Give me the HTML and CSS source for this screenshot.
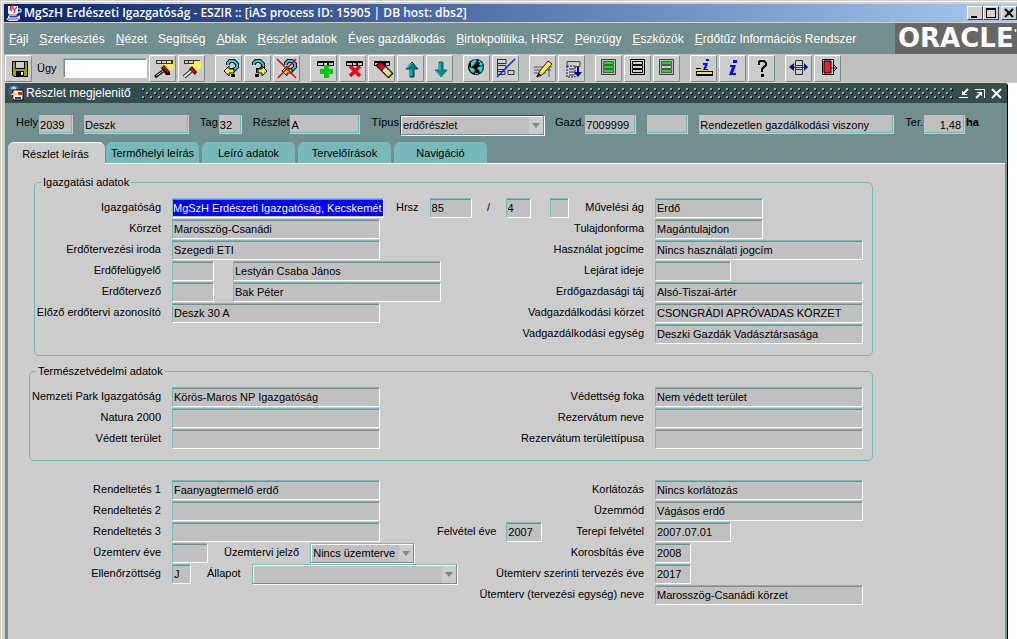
FILE: index.html
```
<!DOCTYPE html>
<html lang="hu">
<head>
<meta charset="utf-8">
<title>MgSzH Erdészeti Igazgatóság - ESZIR</title>
<link rel="stylesheet" href="styles.css">
</head>
<body>
<div class="app">
<header class="titlebar">
  <svg class="cup" width="16" height="16" viewBox="0 0 16 16"><path d="M2 1h10v7l-2 3H4L2 8z" fill="#fff"/><path d="M12 4h3v3h-3" fill="none" stroke="#fff" stroke-width="1"/><path d="M5 1L4 4l2 2M8 0L6 3l3 2-1 3M11 2L9 4" fill="none" stroke="#d8303c" stroke-width="1.4"/><path d="M2 10l2 2h7l3-2v4l-3 2H3l-3-2 2-1z" fill="#dfe3f5"/><path d="M3 10h8M4 12h7M2 14h11" stroke="#5661a8"/></svg>
  <h1>MgSzH Erdészeti Igazgatóság - ESZIR :: [iAS process ID: 15905 | DB host: dbs2]</h1>
  <div class="winbtns">
    <button aria-label="Kis méret"><svg width="14" height="12"><path d="M3 9h6v2H3z"/></svg></button>
    <button aria-label="Teljes méret"><svg width="14" height="12"><path d="M2 1h10v10H2zM3 3v7h8V3z" fill-rule="evenodd"/></svg></button>
    <button class="last" aria-label="Bezárás"><svg width="14" height="12"><path d="M3 2l8 8M11 2l-8 8" stroke="#000" stroke-width="2"/></svg></button>
  </div>
</header>
<div class="menubar">
  <nav class="menu">
    <a href="#"><u>F</u>ájl</a><a href="#"><u>S</u>zerkesztés</a><a href="#"><u>N</u>ézet</a><a href="#">Segítség</a><a href="#"><u>A</u>blak</a><a href="#"><u>R</u>észlet adatok</a><a href="#">Éves gazdálkodás</a><a href="#"><u>B</u>irtokpolitika, HRSZ</a><a href="#"><u>P</u>énzügy</a><a href="#"><u>E</u>szközök</a><a href="#"><u>E</u>rdőtűz Információs Rendszer</a>
  </nav>
  <div class="oracle">ORACLE<sup>'</sup></div>
</div>
<div class="toolbar" role="toolbar">
  <button class="tool" aria-label="Mentés"><svg viewBox="0 0 25 25"><path d="M6 5h16v16H8l-2-2z"/><path d="M7 6h2v7h10V6h2v14H8l-1-1z" fill="#a89c00"/><path d="M10 6h8v6h-8z" fill="#ccc"/><path d="M10 15h8v5h-8z"/><path d="M15 16h2v3h-2z" fill="#fff"/></svg></button>
  <label class="ugy" for="ugy">Ügy</label><input class="search" id="ugy">
  <div class="group">
  <button class="tool" aria-label="Keresés megadása"><svg viewBox="0 0 25 25"><path d="M12 8h11v5l-5 3-6-4z" fill="#ffee60"/><path d="M6 4h17v4H6z" fill="#333"/><path d="M7 5h4v2H7zM12 5h4v2h-4z" fill="#ccc"/><path d="M17 5h4v2h-4z" fill="#ffee60"/><path d="M11 12l3-3 6 7v3h-4z"/><path d="M12 12l3-2 4 6-1 1z" fill="#e00010"/><path d="M13 15l-8 6" stroke="#000" stroke-width="3"/><path d="M13 15l-7 5" stroke="#ccc"/></svg></button>
  <button class="tool" aria-label="Keresés indítása"><svg viewBox="0 0 25 25"><path d="M10 8h10l2-4v8l-8 5z" fill="#ffee60"/><path d="M5 4h10v4H5z" fill="#333"/><path d="M6 5h3v2H6zM10 5h4v2h-4z" fill="#ccc"/><path d="M15 4h6v4h-6z" fill="#ffee60"/><path d="M15 4h6v1h-6z" fill="#333"/><path d="M10 13l3-3 5 6-2 3z"/><path d="M11 13l2-2 4 5-1 2z" fill="#e00010"/><path d="M12 15l-7 6" stroke="#333" stroke-width="4"/><path d="M12 15l-7 6" stroke="#ddd" stroke-width="2"/></svg></button>
  </div>
  <div class="group">
  <button class="tool" aria-label="Előző lekérdezés"><svg viewBox="0 0 25 25"><path d="M12 9V7l2-2h4l3 3v3l-3 3h-2v3" fill="none" stroke="#000" stroke-width="4"/><path d="M12 9V7l2-2h4l3 3v3l-3 3h-2v3" fill="none" stroke="#20c8e0" stroke-width="2"/><path d="M15 18h4v3h-4z"/><path d="M8 15l5-5v3h5v4h-5v3z" fill="#ffe840" stroke="#000"/></svg></button>
  <button class="tool" aria-label="Következő lekérdezés"><svg viewBox="0 0 25 25"><path d="M9 9V7l2-2h4l3 3v3l-3 3h-2v3" fill="none" stroke="#000" stroke-width="4"/><path d="M9 9V7l2-2h4l3 3v3l-3 3h-2v3" fill="none" stroke="#20c8e0" stroke-width="2"/><path d="M10 18h4v3h-4z"/><path d="M22 15l-5-5v3h-4v4h4v3z" fill="#ffe840" stroke="#000"/></svg></button>
  <button class="tool" aria-label="Lekérdezés megszakítása"><svg viewBox="0 0 25 25"><path d="M12 9V7l2-2h4l3 3v3l-3 3h-2v3" fill="none" stroke="#000" stroke-width="4"/><path d="M12 9V7l2-2h4l3 3v3l-3 3h-2v3" fill="none" stroke="#20c8e0" stroke-width="2"/><path d="M8 15l5-5v3h5v4h-5v3z" fill="#ffe840" stroke="#000"/><path d="M3 3l19 19M22 3L4 22" stroke="#e00010" stroke-width="1.5"/></svg></button>
  </div>
  <div class="group">
  <button class="tool" aria-label="Új sor"><svg viewBox="0 0 25 25"><path d="M6 5h17v5H6z"/><path d="M7 7h5v2H7zM13 7h3v2h-3zM18 7h4v2h-4z" fill="#ccc"/><path d="M13 9h5v4h4v5h-4v4h-5v-4H9v-5h4z" fill="#0c0"/></svg></button>
  <button class="tool" aria-label="Sor törlése"><svg viewBox="0 0 25 25"><path d="M6 5h17v5H6z"/><path d="M7 7h5v2H7zM13 7h3v2h-3zM18 7h4v2h-4z" fill="#ccc"/><path d="M10 10l10 10M20 10L10 20" stroke="#f00010" stroke-width="3.5"/></svg></button>
  <button class="tool" aria-label="Sor kiürítése"><svg viewBox="0 0 25 25"><path d="M5 5h16v5H5z"/><path d="M6 7h4v2H6zM17 7h3v2h-3z" fill="#ccc"/><path d="M9 7l13 13" stroke="#000" stroke-width="7"/><path d="M10 8l5 5" stroke="#e00010" stroke-width="5"/><path d="M15 13l2 2" stroke="#fff" stroke-width="5"/><path d="M17 15l4 4" stroke="#ffe860" stroke-width="5"/></svg></button>
  <button class="tool" aria-label="Előző rekord"><svg viewBox="0 0 25 25"><path d="M14 6l6 7h-4v8h-4v-8H8z" fill="#008080" stroke="#044"/><path d="M14 7l-5 5M13 13v7" stroke="#30d8e0"/></svg></button>
  <button class="tool" aria-label="Következő rekord"><svg viewBox="0 0 25 25"><path d="M14 21l6-7h-4V6h-4v8H8z" fill="#008080" stroke="#077"/><path d="M13 7v8M9 15l5 5" stroke="#30d8e0"/></svg></button>
  </div>
  <div class="group">
  <button class="tool" aria-label="Térkép"><svg viewBox="0 0 25 25"><circle cx="12" cy="11" r="8"/><path d="M7 6l4-3 2 2-2 2-1 2-3 2zM15 4l4 4-2 2-2-1 1-2-2-1zM5 11l4 1 2 2-1 3-3-1zM14 11l5-1-1 5-2 2-1-3-2-1zM11 17h3v1h-3z" fill="#20d8e0"/></svg></button>
  <button class="tool" aria-label="Lista ki/be"><svg viewBox="0 0 25 25"><path d="M4.500 3v16M4 3.500h9v4H4M4 9.500h9v4H4M4 15.500h8v3H4M15 14.500h6v4h-6z" fill="none" stroke="#333"/><path d="M22 3L4 21" stroke="#1020e0" stroke-width="1.500"/></svg></button>
  </div>
  <div class="group">
  <button class="tool" aria-label="Szerkesztés"><svg viewBox="0 0 25 25"><path d="M4 11h18M4 14h17M4 17h12M19 21V11" stroke="#555"/><path d="M18 5L9 16l-2 5 5-2L22 8z" fill="#ffe840" stroke="#222"/><path d="M6 21l3-4 2 2z"/></svg></button>
  <button class="tool" aria-label="Értéklista"><svg viewBox="0 0 25 25"><path d="M8 5.500h13v5H8z" fill="#ccc" stroke="#444"/><path d="M8 10h8v11H8z" fill="#ccc" stroke="#114" stroke-dasharray="2 1"/><path d="M10 13h5M10 16h5M10 19h5" stroke="#226"/><path d="M18 11h2v5h3l-4 5-4-5h3z" fill="#000090"/></svg></button>
  </div>
  <div class="group">
  <button class="tool" aria-label="Lista 1"><svg viewBox="0 0 25 25"><path d="M5.500 3.500h14v15h-14z" fill="#bbb" stroke="#444"/><path d="M7.500 5.500h10v3h-10zM7.500 9.500h10v3h-10zM7.500 13.500h10v3h-10z" fill="#0e0" stroke="#555"/></svg></button>
  <button class="tool" aria-label="Lista 2"><svg viewBox="0 0 25 25"><path d="M5.500 3.500h14v15h-14z" fill="#ccc" stroke="#000"/><path d="M7.500 5.500h10v3h-10zM7.500 9.500h10v3h-10zM7.500 13.500h10v3h-10z" fill="#ccc" stroke="#000"/></svg></button>
  <button class="tool" aria-label="Lista 3"><svg viewBox="0 0 25 25"><path d="M5.500 3.500h14v15h-14z" fill="#bbb" stroke="#444"/><path d="M7.500 5.500h10v3h-10zM7.500 13.500h10v3h-10z" fill="#0e0" stroke="#555"/><path d="M7.500 9.500h10v3h-10z" fill="#ccc" stroke="#555"/></svg></button>
  </div>
  <div class="group">
  <button class="tool" aria-label="Mező információ"><svg viewBox="0 0 25 25"><path d="M5 12h5v1H5zM5 15h17v5H5z"/><path d="M6 16h15v2H6z" fill="#fe0"/><path d="M15 3h3v2h-3zM12 7h5l-2 6h2v1h-5l2-5h-2z" fill="#0010f0"/></svg></button>
  <button class="tool" aria-label="Információ"><svg viewBox="0 0 25 25"><path d="M13 4h4v3h-4zM10 9h6l-3 8h3v2H9l3-8h-2z" fill="#0010f0"/></svg></button>
  <button class="tool" aria-label="Súgó"><svg viewBox="0 0 25 25"><path d="M10 9V6l1-1h4l2 2v2l-4 4v3" fill="none" stroke="#000" stroke-width="2"/><path d="M12 18h3v3h-3z"/></svg></button>
  </div>
  <div class="group">
  <button class="tool" aria-label="Oldalváltás"><svg viewBox="0 0 25 25"><path d="M9.500 4.500h7v14h-7zM9 9.500h8M9 13.500h8" fill="#ccc" stroke="#333"/><path d="M8 7v8l-5-4zM18 7v8l4-4z" fill="#000080"/><path d="M8 11.500h10" stroke="#333"/></svg></button>
  <button class="tool" aria-label="Kilépés"><svg viewBox="0 0 25 25"><path d="M7.500 3.500h11v15h-11z" fill="#ccc" stroke="#000"/><path d="M9 5h7v12H9z" fill="#f02020" stroke="#000"/><path d="M16 12h6M19 9l3 3-3 3" fill="none" stroke="#000"/></svg></button>
  </div>
</div>
<div class="workspace">
<main class="window">
  <div class="wintitle">
    <svg width="16" height="16" viewBox="0 0 16 16"><circle cx="6" cy="6" r="6" fill="#4a56a8"/><path d="M2 3l4-2 3 2-3 2z" fill="#9de"/><path d="M5 5h10v10H5z" fill="#fff" stroke="#000"/><path d="M10 7h4v3h-4z" fill="#d22"/><path d="M7 12h6v2H7z" fill="#338"/><path d="M8 4L3 10h3l-2 5 6-7H7z" fill="#ffe020"/></svg>
    <h2>Részlet megjelenitő</h2>
    <div class="bumps"></div>
    <button aria-label="Kicsinyít"><svg width="11" height="11"><path d="M0 9h9v1H0zM3 3h1v3h4v1H3z"/><path d="M4 6l5-5" stroke="#fff" stroke-width="2"/></svg></button>
    <button aria-label="Nagyít"><svg width="11" height="11"><path d="M0 1h10v9H9V2H0zM2 4h5v4H6V5H2z"/><path d="M1 10l5-5" stroke="#fff" stroke-width="2"/></svg></button>
    <button aria-label="Ablak bezárása"><svg width="11" height="11"><path d="M1 1l9 9M10 1l-9 9" stroke="#fff" stroke-width="2"/></svg></button>
  </div>
  <div class="head">
    <span class="pair"><label for="hely">Hely</label><input id="hely" class="w34" value="2039"></span>
    <input class="w105" value="Deszk" aria-label="Hely neve">
    <span class="pair"><label for="tag">Tag</label><input id="tag" class="w23" value="32"></span>
    <span class="pair"><label for="reszlet">Részlet</label><input id="reszlet" class="w70" value="A"></span>
    <span class="pair"><label for="tipus">Típus</label><span class="combo w144"><select id="tipus"><option>erdőrészlet</option></select></span></span>
    <span class="pair"><label for="gazd">Gazd.</label><input id="gazd" class="w51" value="7009999"></span>
    <input class="w41" aria-label="Gazdálkodó alkód">
    <input class="w195" value="Rendezetlen gazdálkodási viszony" aria-label="Viszony">
    <span class="pair"><label for="ter">Ter.</label><input id="ter" class="w41 num" value="1,48"><b>ha</b></span>
  </div>
  <div class="tabs" role="tablist">
    <button class="tab on" role="tab" aria-selected="true">Részlet leírás</button><button class="tab" role="tab">Termőhelyi leírás</button><button class="tab" role="tab">Leíró adatok</button><button class="tab" role="tab">Tervelőírások</button><button class="tab" role="tab">Navigáció</button>
  </div>
  <form class="form">
    <fieldset class="first"><legend>Igazgatási adatok</legend>
      <div class="row"><label class="lead" for="a1">Igazgatóság</label><input id="a1" class="w212 selected" value="MgSzH Erdészeti Igazgatóság, Kecskemét"><label class="mid" for="a2">Hrsz</label><input id="a2" class="w42" value="85"><span class="slash">/</span><input class="w25" value="4" aria-label="Hrsz alátörés"><input class="w19 apart" aria-label="Hrsz betű"><label class="right" for="b1">Művelési ág</label><span class="cell"><input id="b1" class="w108" value="Erdő"></span></div>
      <div class="row"><label class="lead" for="a3">Körzet</label><input id="a3" class="w208" value="Marosszög-Csanádi"><label class="right" for="b2">Tulajdonforma</label><span class="cell"><input id="b2" class="w108" value="Magántulajdon"></span></div>
      <div class="row"><label class="lead" for="a4">Erdőtervezési iroda</label><input id="a4" class="w208" value="Szegedi ETI"><label class="right" for="b3">Használat jogcíme</label><span class="cell"><input id="b3" class="w208" value="Nincs használati jogcím"></span></div>
      <div class="row"><label class="lead" for="a5">Erdőfelügyelő</label><input id="a5" class="w42"><input class="w208 apart" value="Lestyán Csaba János" aria-label="Erdőfelügyelő neve"><label class="right" for="b4">Lejárat ideje</label><span class="cell"><input id="b4" class="w76"></span></div>
      <div class="row"><label class="lead" for="a6">Erdőtervező</label><input id="a6" class="w42"><input class="w208 apart" value="Bak Péter" aria-label="Erdőtervező neve"><label class="right" for="b5">Erdőgazdasági táj</label><span class="cell"><input id="b5" class="w208" value="Alsó-Tiszai-ártér"></span></div>
      <div class="row"><label class="lead" for="a7">Előző erdőtervi azonosító</label><input id="a7" class="w208" value="Deszk 30 A"><label class="right" for="b6">Vadgazdálkodási körzet</label><span class="cell"><input id="b6" class="w208" value="CSONGRÁDI APRÓVADAS KÖRZET"></span></div>
      <div class="row"><label class="right" for="b7">Vadgazdálkodási egység</label><span class="cell"><input id="b7" class="w208" value="Deszki Gazdák Vadásztársasága"></span></div>
    </fieldset>
    <fieldset class="second"><legend>Természetvédelmi adatok</legend>
      <div class="row"><label class="lead" for="c1">Nemzeti Park Igazgatóság</label><input id="c1" class="w208" value="Körös-Maros NP Igazgatóság"><label class="right" for="d1">Védettség foka</label><span class="cell"><input id="d1" class="w208" value="Nem védett terület"></span></div>
      <div class="row"><label class="lead" for="c2">Natura 2000</label><input id="c2" class="w208"><label class="right" for="d2">Rezervátum neve</label><span class="cell"><input id="d2" class="w208"></span></div>
      <div class="row"><label class="lead" for="c3">Védett terület</label><input id="c3" class="w208"><label class="right" for="d3">Rezervátum területtípusa</label><span class="cell"><input id="d3" class="w208"></span></div>
    </fieldset>
    <div class="plain">
      <div class="row"><label class="lead" for="e1">Rendeltetés 1</label><input id="e1" class="w208" value="Faanyagtermelő erdő"><label class="right" for="f1">Korlátozás</label><span class="cell"><input id="f1" class="w208" value="Nincs korlátozás"></span></div>
      <div class="row"><label class="lead" for="e2">Rendeltetés 2</label><input id="e2" class="w208"><label class="right" for="f2">Üzemmód</label><span class="cell"><input id="f2" class="w208" value="Vágásos erdő"></span></div>
      <div class="row"><label class="lead" for="e3">Rendeltetés 3</label><input id="e3" class="w208"><label class="year" for="e4">Felvétel éve</label><input id="e4" class="w36" value="2007"><label class="right" for="f3">Terepi felvétel</label><span class="cell"><input id="f3" class="w76" value="2007.07.01"></span></div>
      <div class="row"><label class="lead" for="e5">Üzemterv éve</label><input id="e5" class="w36"><label class="mid" for="e6">Üzemtervi jelző</label><span class="combo w104"><select id="e6"><option>Nincs üzemterve</option></select></span><label class="right" for="f4">Korosbítás éve</label><span class="cell"><input id="f4" class="w36" value="2008"></span></div>
      <div class="row"><label class="lead" for="e7">Ellenőrzöttség</label><input id="e7" class="w19" value="J"><label class="mid" for="e8">Állapot</label><span class="combo w205"><select id="e8"><option></option></select></span><label class="right" for="f5">Ütemterv szerinti tervezés éve</label><span class="cell"><input id="f5" class="w36" value="2017"></span></div>
      <div class="row"><label class="right" for="f6">Ütemterv (tervezési egység) neve</label><span class="cell"><input id="f6" class="w208" value="Marosszög-Csanádi körzet"></span></div>
    </div>
  </form>
</main>
</div>
</div>
</body>
</html>
```
FILE: styles.css
```
* { box-sizing: border-box; }
html, body { margin: 0; height: 100%; }
body { font: 11px/18px "Liberation Sans", Arial, sans-serif; color: #000; background: #d4d0c8; overflow: hidden; }
button, input, select { font: inherit; color: inherit; margin: 0; border-radius: 0; }
h1, h2 { margin: 0; }
.app { display: flex; flex-direction: column; min-height: 100vh; padding: 4px 0 0 4px; background: #d4d0c8; box-shadow: inset 1px 1px #d4d0c8, inset 2px 2px #fff; }

.titlebar { display: flex; align-items: center; height: 18px; padding-left: 2px; background: linear-gradient(90deg, #0a246a, #a6caf0); }
.titlebar h1 { flex: 1; margin-left: 2px; font: 600 12px/18px "Open Sans", Tahoma, sans-serif; color: #fff; white-space: nowrap; }
.winbtns { display: flex; }
.winbtns button { display: flex; width: 16px; height: 14px; padding: 0; background: #d4d0c8; border: 1px solid; border-color: #fff #404040 #404040 #fff; }
.winbtns .last { margin-left: 2px; }

.menubar { display: flex; height: 31px; margin-top: 1px; background: #718f8e; }
.menu { flex: 1; display: flex; align-items: center; gap: 11px; padding-left: 5px; font-size: 12px; }
.menu a { color: #fff; text-decoration: none; white-space: nowrap; }
.oracle { width: 122px; padding-left: 3px; background: #666; color: #fff; font: bold 26px/31px "DejaVu Sans", sans-serif; white-space: nowrap; overflow: hidden; }
.oracle sup { font-size: 11px; line-height: 1px; }

.toolbar { display: flex; align-items: center; height: 28px; padding-left: 1px; background: #c0c0c0; }
.tool { flex: none; width: 27px; height: 27px; padding: 0; background: #ccc; border: 1px solid; border-color: #fff #718f8e #718f8e #fff; border-radius: 2px; }
.tool svg { display: block; width: 25px; height: 25px; }
.ugy { margin: 0 6px 0 5px; }
.search { width: 84px; height: 20px; background: #fff; border: 1px solid; border-color: #77b9b9 #fff #fff #77b9b9; outline: 0; box-shadow: inset 1px 1px #718f8e; }
.group { display: flex; gap: 2px; margin-right: 10px; }
.search + .group { margin-left: 2px; }

.workspace { flex: 1; display: flex; background: #fff; margin-top: 1px; border-left: 1px solid #d4d0c8; }
.window { flex: 1; display: flex; flex-direction: column; min-width: 0; margin-right: 9px; background: #718f8e; border-right: 1px solid #000; border-radius: 0 3px 0 0; }
.wintitle { display: flex; align-items: center; gap: 5px; height: 20px; padding: 0 5px 0 3px; background: #344e4e; border-top-right-radius: 3px; }
.wintitle h2 { margin-left: -3px; font: 12px/20px "Liberation Sans", Arial, sans-serif; color: #fff; white-space: nowrap; }
.wintitle button { display: flex; padding: 0; border: 0; background: none; }
.wintitle button svg { fill: #fff; }
.bumps { flex: 1; height: 11px; margin-left: 6px; background:
  conic-gradient(from 270deg at 2px 2px, #77b9b9 90deg, transparent 0) 0 0 / 8px 8px,
  conic-gradient(from 270deg at 2px 2px, #77b9b9 90deg, transparent 0) 4px 4px / 8px 8px,
  conic-gradient(from 270deg at 2px 2px, #000 90deg, transparent 0) 1px 1px / 8px 8px,
  conic-gradient(from 270deg at 2px 2px, #000 90deg, transparent 0) 5px 5px / 8px 8px; }

.head { display: flex; gap: 11px; padding: 12px 0 8px 11px; height: 39px; white-space: nowrap; }
.pair { display: flex; gap: 1px; }
.head label, .head b { line-height: 15px; }
.head input { height: 19px; padding: 0 1px; background: #c0c0c0; border: 0; box-shadow: inset -1px -1px #ccc, inset -2px -2px #77b9b9; outline: 0; }
.head .num { text-align: right; padding-right: 4px; }

.tabs { display: flex; gap: 1px; padding-left: 3px; }
.tab { width: 95px; height: 21px; padding: 0; background: #77b9b9; border: 0; border-right: 2px solid #718f8e; border-radius: 6px 6px 0 0; }
.tab.on { position: relative; width: 97px; height: 22px; margin-bottom: -1px; background: #ccc; border-top: 1px solid #fff; border-right-color: #ccc; }

.form { flex: 1; margin: 0 2px 0 3px; padding: 12px 20px 20px 21px; background: #ccc; border-top: 1px solid #fff; }
.form > * { max-width: 844px; }
fieldset { margin: 0; min-width: 0; padding: 9px 9px 10px 0; border: 1px solid #77b9b9; border-radius: 5px; }
legend { height: 13px; margin-left: 6px; padding: 0 2px; line-height: 13px; }
.first { margin-left: 5px; max-width: 839px; }
.second { margin-top: 9px; }
.plain { margin-top: 19px; padding: 0 10px 0 1px; }
.row { display: flex; height: 21px; align-items: flex-start; white-space: nowrap; }
.lead { width: 131px; margin-right: 11px; text-align: right; }
.first .lead { width: 126px; }
.right { margin-left: auto; margin-right: 11px; }
.mid { margin: 0 11px 0 16px; }
.selected + .mid { margin-left: 12px; }
.year { margin: 0 10px 0 57px; }
.slash { width: 34px; text-align: center; }
.apart { margin-left: 19px; }
.cell { display: flex; width: 208px; }
.row input { height: 20px; padding: 0 1px; background: #c0c0c0; border: 1px solid; border-color: #77b9b9 #fff #fff #77b9b9; border-radius: 1px; box-shadow: inset 0 1px #718f8e; outline: 0; }
.row input.selected { padding: 1px 0; color: #fff; background: linear-gradient(#00f, #00f) content-box, #c0c0c0; }

.combo { position: relative; display: flex; height: 20px; }
.combo select { width: 100%; padding: 0 14px 0 2px; appearance: none; background: linear-gradient(#ccc, #ccc) right / 14px 100% no-repeat, #c0c0c0; border: 1px solid; border-color: #77b9b9 #718f8e #718f8e #77b9b9; box-shadow: inset 1px 1px #fff, 1px 1px #fff; opacity: 1; outline: 0; }
.head .combo select { border-color: #344e4e #718f8e #718f8e #344e4e; }
.combo::after { content: ""; position: absolute; right: 4px; top: 8px; border: 4px solid transparent; border-top: 5px solid #718f8e; border-bottom: 0; }

.w19 { width: 19px; } .w23 { width: 23px; } .w25 { width: 25px; } .w34 { width: 34px; } .w36 { width: 36px; }
.w41 { width: 41px; } .w42 { width: 42px; } .w51 { width: 51px; } .w70 { width: 70px; } .w76 { width: 76px; }
.w104 { width: 104px; } .w105 { width: 105px; } .w108 { width: 108px; } .w144 { width: 144px; }
.w195 { width: 195px; } .w205 { width: 205px; } .w208 { width: 208px; } .w212 { width: 212px; }
```
